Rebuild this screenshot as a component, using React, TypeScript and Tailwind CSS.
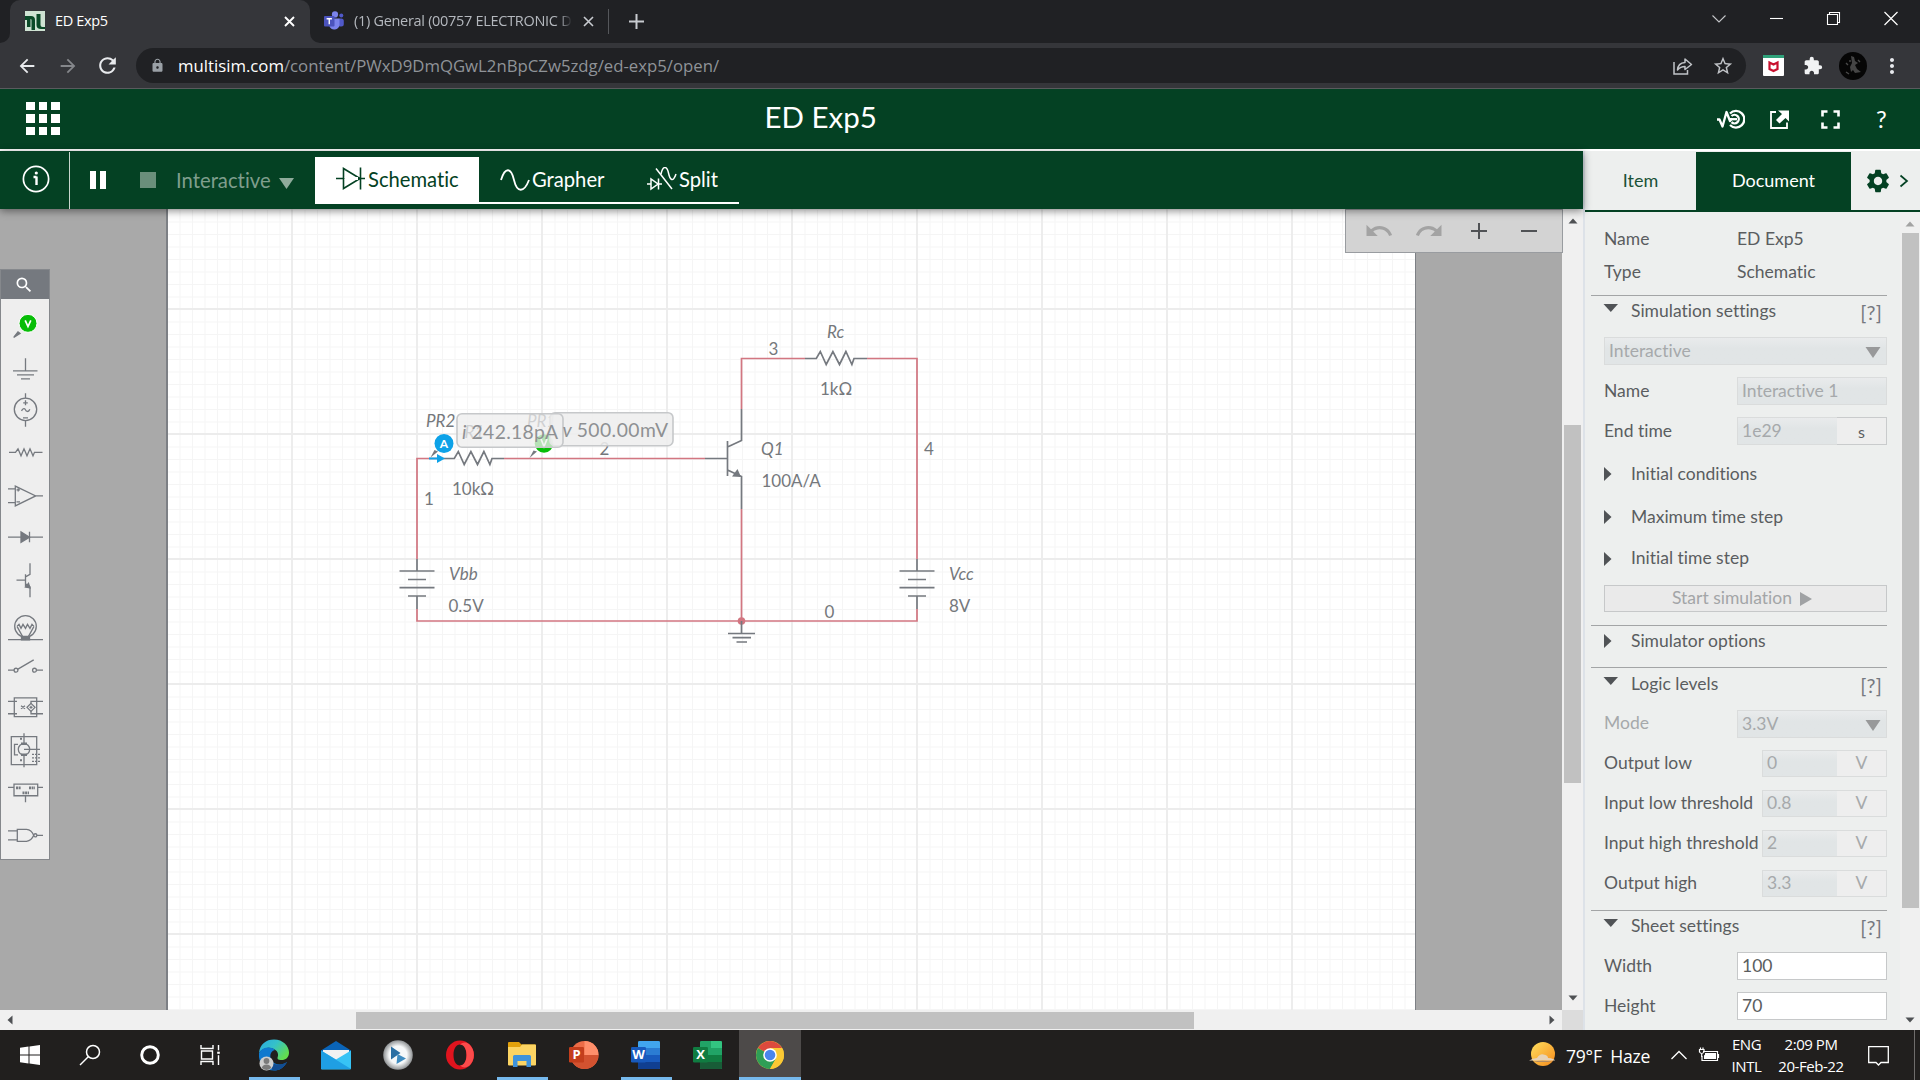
import React from "react";
import {
  MdOutlineStarBorder,
  MdExtension,
  MdMoreVert,
  MdLock,
  MdArrowBack,
  MdArrowForward,
  MdRefresh,
  MdUndo,
  MdRedo,
  MdSettings,
  MdSearch,
} from "react-icons/md";

const UI = "font-['Open_Sans',sans-serif]";
const LATO = "font-[Lato,sans-serif] [font-variant-ligatures:none]";

/* ---------- Browser chrome ---------- */

function TabStrip() {
  return (
    <div className="flex h-[43px] bg-[#202124]">
      <div className="relative ml-[10px] flex w-[300px] items-center rounded-t-[10px] bg-[#35363a] pl-[15px]">
        <svg className="absolute -left-[10px] bottom-0" width="10" height="10" viewBox="0 0 10 10">
          <path d="M10 0V10H0A10 10 0 0 0 10 0Z" fill="#35363a" />
        </svg>
        <svg className="absolute -right-[10px] bottom-0" width="10" height="10" viewBox="0 0 10 10">
          <path d="M0 0V10H10A10 10 0 0 1 0 0Z" fill="#35363a" />
        </svg>
        <svg width="20" height="20" viewBox="0 0 20 20" className="mt-[-1px]">
          <rect width="20" height="20" fill="#cfe3d3" />
          <path d="M0 5H6Q10 5 10 9V19H6.500V9Q6.500 8 5.500 8V16H2V9H0Z" fill="#0a4a28" />
          <path d="M11.500 3H15.500V14Q15.500 16 17.500 16H20V18H16Q11.500 18 11.500 14Z" fill="#0a4a28" />
        </svg>
        <span className={`ml-[10px] mt-[-2px] text-[14.5px] tracking-[-0.35px] text-white ${UI}`}>ED Exp5</span>
        <svg className="absolute left-[274px] top-[16px]" width="11" height="11" viewBox="0 0 11 11">
          <path d="M1 1L10 10M10 1L1 10" stroke="#fff" strokeWidth="1.9" />
        </svg>
      </div>
      <div className="flex items-center pl-[14px]">
        <svg width="20" height="20" viewBox="0 0 20 20" className="mt-[-1px]">
          <circle cx="11" cy="3.4" r="3.1" fill="#7b83eb" />
          <circle cx="17.3" cy="4.6" r="2" fill="#5059c9" />
          <rect x="13.5" y="7.6" width="6.3" height="8" rx="2.5" fill="#5059c9" />
          <path d="M5.5 7.5H15.5V14A5.300 5.300 0 0 1 5.500 15.500Z" fill="#7b83eb" />
          <rect x="0" y="5" width="10.5" height="10.5" rx="1" fill="#4b53bc" />
          <path d="M2.6 7.7H7.9M5.25 7.7V13.2" stroke="#fff" strokeWidth="1.4" />
        </svg>
        <span
          className={`ml-[10px] mt-[-2px] w-[218px] overflow-hidden whitespace-nowrap text-[14.5px] tracking-[-0.3px] text-[#b4b8be] [mask-image:linear-gradient(90deg,#000_205px,transparent_218px)] ${UI}`}
        >
          (1) General (00757 ELECTRONIC DEV
        </span>
        <svg className="ml-[11px]" width="11" height="11" viewBox="0 0 11 11">
          <path d="M1 1L10 10M10 1L1 10" stroke="#c8cbd0" strokeWidth="1.6" />
        </svg>
        <span className="ml-[14px] h-[25px] w-px bg-[#55575b]" />
        <svg className="ml-[20px]" width="15" height="15" viewBox="0 0 15 15">
          <path d="M7.5 0V15M0 7.5H15" stroke="#c8cbd0" strokeWidth="2" />
        </svg>
      </div>
      <svg className="ml-auto mr-[14px] mt-[11px]" width="194" height="16" viewBox="0 0 194 16" fill="none">
        <path d="M0.5 4.5L7 11L13.500 4.500" stroke="#c5c7ca" strokeWidth="1.1" />
        <path d="M58 7.500H71" stroke="#fff" strokeWidth="1.100" />
        <path d="M115.500 3.500H125.500V13.500H115.500ZM117.500 3.500V1.500H127.500V11.500H125.500" stroke="#fff" strokeWidth="1.100" />
        <path d="M172.500 1L185.500 14M185.500 1L172.500 14" stroke="#fff" strokeWidth="1.200" />
      </svg>
    </div>
  );
}

function AddressBar() {
  return (
    <div className="flex h-[46px] items-center border-b border-[#5a5b5e] bg-[#35363a] text-[#e8eaed]">
      <MdArrowBack size={22} className="ml-[16px]" />
      <MdArrowForward size={22} className="ml-[19px] text-[#85878b]" />
      <MdRefresh size={25} className="ml-[16px]" />
      <div className="ml-[16px] flex h-[35px] w-[1610px] items-center rounded-full bg-[#202124] pl-[14px]">
        <MdLock size={15} className="text-[#9aa0a6]" />
        <span className={`ml-[13px] whitespace-nowrap text-[16.750px] text-[#8f9398] ${UI}`}>
          <span className="text-white">multisim.com</span>/content/PWxD9DmQGwL2nBpCZw5zdg/ed-exp5/open/
        </span>
        <svg className="ml-auto" width="20" height="18" viewBox="0 0 20 18" fill="none" stroke="#c0c3c7" strokeWidth="1.5">
          <path d="M1 5V17H14.500V13" />
          <path d="M4.500 13Q5 6 12 5.500V2L18.500 7.500L12 12.500V9.500Q7.500 9.500 4.500 13Z" strokeLinejoin="round" />
        </svg>
        <MdOutlineStarBorder size={22} className="ml-[19px] mr-[12px] text-[#c0c3c7]" />
      </div>
      <svg className="ml-[17px]" width="21" height="21" viewBox="0 0 21 21">
        <rect width="21" height="21" rx="1" fill="#fff" />
        <rect width="21" height="3" fill="#2fa27a" />
        <path d="M6.500 14V7.500L10.500 9.500L14.500 7.500V14L10.500 16Z" fill="none" stroke="#c8102e" strokeWidth="2.200" />
      </svg>
      <MdExtension size={20} className="ml-[19px] text-[#f1f3f4]" />
      <svg className="ml-[16px]" width="28" height="28" viewBox="0 0 28 28">
        <circle cx="14" cy="14" r="14" fill="#060606" />
        <path d="M12 4L15 5L16 9L19 11L16 13L18 17L22 20L16 21L14 18L12 20L11 15L13 11Z" fill="#707070" opacity="0.600" />
        <path d="M7 11L9 13M19 8L21 10M7 20L10 22M11 8V10" stroke="#4a4a4a" strokeWidth="1.400" />
      </svg>
      <MdMoreVert size={24} className="ml-[13px]" />
    </div>
  );
}

/* ---------- Multisim header ---------- */

function AppHeader() {
  return (
    <div className="relative flex h-[62px] shrink-0 items-center border-b-2 border-white bg-[#044123]">
      <div className="ml-[26px] mt-[-1px] grid grid-cols-3 gap-x-[4px] gap-y-[4px]">
        {Array.from({ length: 9 }, (_, i) => (
          <span key={i} className="h-[8.500px] w-[8.500px] bg-white" />
        ))}
      </div>
      <div className={`ml-[705px] mt-[-4px] w-[130px] whitespace-nowrap text-[29.500px] leading-[36px] text-white ${LATO}`}>ED Exp5</div>
      <svg className="ml-auto" width="28" height="20" viewBox="0 0 28 20" fill="none" stroke="#fff" strokeWidth="2.300">
        <path d="M0 10.500H2.500L5.500 17.500L9.500 3L13 12L15 9.500" strokeLinejoin="round" />
        <path d="M13 4.500A8.300 8.300 0 1 1 13 16" />
        <path d="M14.500 7A4.300 4.300 0 1 1 14.500 13.200" />
        <path d="M13 10.200H20" />
      </svg>
      <svg className="ml-[25px]" width="19" height="19" viewBox="0 0 19 19" fill="none" stroke="#fff" strokeWidth="1.800">
        <path d="M6 2H1V18H17V12.500" />
        <path d="M8 0.500H19V11.500L15.500 8L9.500 13.500L6 10L12 4Z" fill="#fff" stroke="none" />
      </svg>
      <svg className="ml-[32px]" width="19" height="19" viewBox="0 0 19 19" fill="none" stroke="#fff" strokeWidth="2.600">
        <path d="M1.500 6.500V1.500H6.500M12.500 1.500H17.500V6.500M17.500 12.500V17.500H12.500M6.500 17.500H1.500V12.500" />
      </svg>
      <span className={`ml-[36px] mr-[32px] w-[12px] text-[24px] text-white ${LATO}`}>?</span>
    </div>
  );
}

function Toolbar() {
  return (
    <div className={`z-10 flex h-[58px] w-[1583px] shrink-0 bg-[#044123] text-white shadow-[0_2px_8px_rgba(0,0,0,0.450)] ${LATO}`}>
      <div className="mt-[1px] flex w-[70px] items-center border-r border-[#c8d6cd] pl-[22px]">
        <svg width="28" height="28" viewBox="0 0 28 28" fill="none" className="mt-[-3px]">
          <circle cx="14" cy="14" r="12.600" stroke="#fff" strokeWidth="1.700" />
          <path d="M14.500 11.500V20M11.500 12H14.500" stroke="#fff" strokeWidth="2.400" />
          <circle cx="14.300" cy="8" r="1.600" fill="#fff" />
        </svg>
      </div>
      <div className="ml-[20px] mt-[20px] h-[18px] w-[6px] bg-white" />
      <div className="ml-[4px] mt-[20px] h-[18px] w-[6px] bg-white" />
      <div className="ml-[34px] mt-[21px] h-[16px] w-[16px] bg-[#6a8f7b]" />
      <span className="ml-[20px] mt-[14px] w-[96px] text-[20.300px] leading-[30px] text-[#7f9e8d]">Interactive</span>
      <svg className="ml-[7px] mt-[27px]" width="15" height="11" viewBox="0 0 15 11">
        <path d="M0 0H15L7.500 11Z" fill="#8fab9b" />
      </svg>
      <div className="absolute left-[315px] flex text-[20.200px] leading-[30px]">
        <div className="mt-[6px] flex h-[47px] w-[164px] bg-white pl-[20px] text-[#044123]">
          <svg className="mt-[10px]" width="30" height="23" viewBox="0 0 30 23" fill="none" stroke="#044123" strokeWidth="1.600">
            <path d="M1 11.500H30M8.500 1.500V21.500L25 11.500ZM25.500 0.500V22.500" />
            <path d="M9.500 11.500H23" stroke="#fff" strokeWidth="3" />
          </svg>
          <span className="ml-[3px] mt-[7px]">Schematic</span>
        </div>
        <div className="mt-[6px] flex h-[47px] w-[260px] border-b-2 border-white">
          <svg className="ml-[21px] mt-[12px]" width="30" height="22" viewBox="0 0 30 22" fill="none" stroke="#fff" strokeWidth="1.800">
            <path d="M1 11C5 -2 11 -2 14 11S24 24 29 11" />
          </svg>
          <span className="ml-[2px] mt-[7px] w-[74px]">Grapher</span>
          <svg className="ml-[41px] mt-[10px]" width="30" height="24" viewBox="0 0 30 24" fill="none" stroke="#fff" strokeWidth="1.500">
            <path d="M9 1.500L25 22M0 17H4M4 12V22L11 17ZM11.500 11.500V22.500M11.500 17H15" />
            <path d="M14 7C16 -2 20 -1 21.500 6S26 16 29 7" />
          </svg>
          <span className="ml-[2px] mt-[7px]">Split</span>
        </div>
      </div>
    </div>
  );
}

/* ---------- Component palette ---------- */

const paletteIcons: React.ReactNode[] = [
  <>
    <path d="M-11.300 14L-7 8.500L-5 10Z" fill="#75797f" />
    <circle cx="3" cy="0" r="9" fill="#07bd07" stroke="#fff" strokeWidth="1" />
    <path d="M0.200 -3L3 3.200L5.800 -3" stroke="#fff" strokeWidth="1.700" />
  </>,
  <path d="M0.500 -8V4.500M-12 4.500H12.500M-8 8.500H9M-4 12.500H5" />,
  <>
    <circle cx="0.500" cy="1" r="11.200" />
    <path d="M0.500 -15V-10M0.500 12V18.500M-1.800 -5.500H2.800M0.500 -8V-3M-2 9.500H3" />
    <path d="M-3.500 2.500C-2 -0.500 0 0 0.500 1.500S3.500 4.500 4.800 1" />
  </>,
  <path d="M-16 1H-9.500L-7 -2.500L-4 4.500L-1 -2.500L2 4.500L5 -2.500L8 4.500L9.500 1H17.500" />,
  <>
    <path d="M-9.700 -8.300V11.500L10.700 1.600ZM10.700 1.600H18M-17 -5.500H-9.700M-17 8.300H-9.700" />
    <path d="M-8.500 -4.500H-5M-6.800 -6.200V-2.800M-8.500 7.500H-5" />
  </>,
  <>
    <path d="M-17 0.800H18M4.500 -4.500V6" />
    <path d="M-4 -4.500V6L4.500 0.800Z" fill="#75797f" />
  </>,
  <>
    <path d="M5 -16V-5L0.500 -2.500M0.500 -5V7.500M-8.500 0.800H0.500M0.500 4.500L5 7.500V18" />
    <path d="M5 8.500L0.500 7.800L3.500 4Z" fill="#75797f" />
  </>,
  <>
    <circle cx="0.500" cy="4" r="10.800" />
    <path d="M-17 17.300H18M-8 4L-6 2L-4 6L-2 2L0.500 6L2.500 2L5 6L7 2L9 4M-8 4L-2.500 14M9 4L3.500 14" />
    <path d="M-3.500 14H4.500V17.500H-3.500Z" fill="#75797f" />
  </>,
  <>
    <circle cx="-9" cy="4.800" r="1.900" />
    <circle cx="9.500" cy="4.800" r="1.900" />
    <path d="M-17 4.800H-11M11.500 4.800H18M-7.500 4L8.700 -5.500" />
  </>,
  <>
    <path d="M-10.700 -9.400H11.700V9.200H-10.700ZM-17 -6H-8M-17 6.400H-8M18 -6H6V6.400H18" />
    <path d="M6 -4L10 0L6 4L2 0Z" fill="#eee" />
    <path d="M-4 -1.500L0 1.500M0 -1.500L-4 1.500M4.500 0H7.500M6 -1.500V1.500" />
  </>,
  <>
    <path d="M-13.700 -13.800H11.700V14.300H-13.700ZM-1 -17V-7M-1 5V17M-1 -1H15M-7 -6H-10.500V4.500H-7" />
    <circle cx="-1" cy="-1" r="5.700" />
    <path d="M-4 -6.500H2M-4 4.500H2" strokeWidth="2.500" />
    <path d="M7 4H15M7 7.500H15M7 11H15" strokeDasharray="2 1" />
    <path d="M-5 -11.500H-3M-5 10H-3" strokeWidth="2" />
  </>,
  <>
    <path d="M-11 -9.200H12.700V2.400H-11ZM-17 -6H-11M12.700 -6H18M0.500 2.400V9" />
    <path d="M-9 -5.500H-4M4 -5.500H10M-2.500 -0.500H4" strokeWidth="2.600" strokeDasharray="2 0.600" />
  </>,
  <>
    <path d="M-7.700 -5.900H1.500Q6.500 -5.500 8.700 0Q6.500 5.500 1.500 6H-7.700ZM-17 -4.500H-7.700M-17 4.500H-7.700M12 0H18" />
    <circle cx="10.300" cy="0" r="1.600" />
  </>,
];

function Palette() {
  return (
    <div className="absolute left-0 top-[60px] flex h-[591px] w-[50px] flex-col border border-[#85888c] bg-[#eee]">
      <div className="mb-[3px] flex h-[29px] items-center justify-center bg-[#75797f] pr-[2px] pt-[1px]">
        <MdSearch size={20} className="text-white" />
      </div>
      {paletteIcons.map((icon, i) => (
        <svg key={i} width="50" height="42.700" viewBox="-25 -21.350 50 42.700" fill="none" stroke="#75797f" strokeWidth="1.300" className="-ml-px shrink-0">
          {icon}
        </svg>
      ))}
    </div>
  );
}

/* ---------- Schematic ---------- */

function Battery({ x }: { x: number }) {
  return (
    <g stroke="#75797f" strokeWidth="1.700">
      <path d={`M${x} 559V571M${x} 596V609`} />
      <path d={`M${x - 17.5} 571H${x + 17.5}M${x - 9} 579.500H${x + 9}M${x - 17.5} 587.700H${x + 17.5}M${x - 9} 596H${x + 9}`} />
    </g>
  );
}

function Circuit() {
  return (
    <svg width="1247" height="801" viewBox="168 209 1247 801" className={LATO} fill="none">
      <defs>
        <pattern id="minor" x="417" y="434" width="12.500" height="12.500" patternUnits="userSpaceOnUse">
          <path d="M0.500 0V12.500M0 0.500H12.500" stroke="#f5f5f5" strokeWidth="1" />
        </pattern>
        <pattern id="major" x="416" y="433" width="125" height="125" patternUnits="userSpaceOnUse">
          <path d="M1 0V125M0 1H125" stroke="#ececec" strokeWidth="1.800" />
        </pattern>
      </defs>
      <rect x="168" y="209" width="1247" height="801" fill="#fff" />
      <rect x="168" y="209" width="1247" height="801" fill="url(#minor)" />
      <rect x="168" y="209" width="1247" height="801" fill="url(#major)" />
      <g stroke="#d27681" strokeWidth="1.700">
        <path d="M443 458.500H417V559M417 609V621H917V609M504 458.500H705M741.500 409V358.500H805M867 358.500H917V559M741.500 509V621" />
      </g>
      <circle cx="741.500" cy="621" r="3.800" fill="#d27681" />
      <Battery x={417} />
      <Battery x={917} />
      <g stroke="#75797f" strokeWidth="1.700">
        <path d="M443 458.500H454.300L458.300 451.500L464.200 464.500L470.900 451.500L477.500 464.500L483.900 451.500L489.900 464.500L492 458.500H504" />
        <path d="M805 358.500H816.300L820.300 351.500L826.200 364.500L832.900 351.500L839.500 364.500L845.900 351.500L851.900 364.500L854 358.500H867" />
        <path d="M705 458.500H727.500M727.500 441V476M741.500 409V440.500L727.500 447M727.500 470L741.500 476.500V509" />
        <path d="M741.500 621V633.500M728 633.500H755M732.500 637.700H751M736.500 642H747" />
      </g>
      <path d="M741 477L732 476.500L737.500 469Z" fill="#75797f" />
      <g fill="#75787c" fontSize="17">
        <g fontStyle="italic">
          <text x="827" y="338">Rc</text>
          <text x="426" y="426.500">PR2</text>
          <text x="761" y="455">Q1</text>
          <text x="449" y="580">Vbb</text>
          <text x="949" y="580">Vcc</text>
        </g>
        <text x="768.500" y="354.500">3</text>
        <text x="820" y="394.500">1kΩ</text>
        <text x="599.500" y="455">2</text>
        <text x="924" y="455">4</text>
        <text x="424" y="505">1</text>
        <text x="452" y="494.500">10kΩ</text>
        <text x="761.500" y="487">100A/A</text>
        <text x="448.500" y="611.500">0.5V</text>
        <text x="949" y="611.500">8V</text>
        <text x="824.500" y="617.500">0</text>
      </g>
      {/* probes */}
      <path d="M529.500 458L533.500 450.500L537 451.500Z" fill="#75797f" />
      <circle cx="544" cy="443.500" r="9.300" fill="#07bd07" />
      <path d="M541 439L544 446.500L547 439" stroke="#fff" strokeWidth="1.700" />
      <g fill="#6d7074" fontSize="17" fontStyle="italic">
        <text x="527" y="426.500">PR1</text>
        <text x="464.500" y="438">R1</text>
      </g>
      <rect x="550" y="412.700" width="123" height="33" rx="5" fill="#eee" fillOpacity="0.880" stroke="#c6c8ca" strokeWidth="1.600" />
      <rect x="457" y="413.700" width="106" height="33.500" rx="5" fill="#eee" fillOpacity="0.760" stroke="#c6c8ca" strokeWidth="1.600" />
      <g fill="#8e9093" fontSize="19.300">
        <text x="462" y="439" textLength="96">
          <tspan fontStyle="italic">i </tspan>242.18pA
        </text>
        <text x="562.500" y="437" textLength="105.500">
          <tspan fontStyle="italic">v </tspan>500.00mV
        </text>
      </g>
      <path d="M430.500 457.500L434.500 450L438 451.500Z" fill="#75797f" />
      <path d="M429 458.500H439" stroke="#0da2e8" strokeWidth="2" />
      <path d="M437 454L445 458.500L437 463Z" fill="#0da2e8" />
      <circle cx="444" cy="443.500" r="9.500" fill="#0da2e8" />
      <text x="444" y="448" fontSize="12" fontWeight="700" fill="#fff" textAnchor="middle">
        A
      </text>
    </svg>
  );
}

function Arrow({ d, c = "#4f5154" }: { d: string; c?: string }) {
  return (
    <svg width="10" height="10" viewBox="0 0 10 10" className="shrink-0">
      <path d={d} fill={c} />
    </svg>
  );
}
const UP = "M0.500 7.500L5 2.500L9.500 7.500Z";
const DOWN = "M0.500 2.500L5 7.500L9.500 2.500Z";
const LEFT = "M7.500 0.500L2.500 5L7.500 9.500Z";
const RIGHT = "M2.500 0.500L7.500 5L2.500 9.500Z";

function Workspace() {
  return (
    <div className="flex h-[821px] w-[1583px] flex-col">
      <div className="relative flex h-[801px]">
        <div className="flex w-[1562px] overflow-hidden bg-[#a9a9a9] pl-[166px]">
          <div className="box-content flex w-[1247px] border-l-2 border-r border-[#7d8085]">
            <Circuit />
          </div>
        </div>
        <div className="flex w-[21px] flex-col items-center bg-[#f0f0f0] pt-[7px]">
          <Arrow d={UP} />
          <div className="mt-[199px] h-[358px] w-[17px] bg-[#c1c1c1]" />
          <div className="mb-[7px] mt-auto">
            <Arrow d={DOWN} />
          </div>
        </div>
        <Palette />
        <div className="absolute left-[1345px] top-0 flex h-[44px] w-[218px] items-center border border-[#999ca0] bg-[#d3d3d3] text-[#a3a3a3]">
          <MdUndo size={30} className="ml-[18px]" />
          <MdRedo size={30} className="ml-[20px]" />
          <svg className="ml-[27px]" width="16" height="16" viewBox="0 0 16 16">
            <path d="M8 0V16M0 8H16" stroke="#505255" strokeWidth="2" />
          </svg>
          <svg className="ml-[34px]" width="16" height="16" viewBox="0 0 16 16">
            <path d="M0 8H16" stroke="#505255" strokeWidth="2" />
          </svg>
        </div>
      </div>
      <div className="flex h-[20px] items-center bg-[#f0f0f0] pl-[5px]">
        <Arrow d={LEFT} />
        <div className="ml-[341px] h-[17px] w-[838px] bg-[#c1c1c1]" />
        <div className="ml-auto mr-[5px]">
          <Arrow d={RIGHT} />
        </div>
        <div className="h-[20px] w-[21px] bg-[#dcdcdc]" />
      </div>
    </div>
  );
}

/* ---------- Properties panel ---------- */

const field = "flex h-[28px] items-center border border-[#dadcdc] bg-linear-to-b from-[#e9ebec] to-[#e1e5e6] to-40% pl-[4px] text-[#a6a9ab]";

function Rule({ className }: { className: string }) {
  return <div className={`h-px w-[296px] shrink-0 bg-[#a3a5a6] ${className}`} />;
}

function Row({ label, children, h = "h-[40px]", muted }: { label: string; children: React.ReactNode; h?: string; muted?: boolean }) {
  return (
    <div className={`flex shrink-0 items-center pl-[13px] ${h}`}>
      <span className={`w-[133px] whitespace-nowrap ${muted ? "mt-[-2px] text-[#a6a9ab]" : ""}`}>{label}</span>
      {children}
    </div>
  );
}

function Section({ label, open, h = "h-[30px]" }: { label: string; open?: boolean; h?: string }) {
  return (
    <div className={`flex shrink-0 items-center pl-[12px] ${h}`}>
      <svg width="16" height="16" viewBox="0 0 16 16" className={open ? "mt-[-6px]" : ""}>
        <path d={open ? "M0.500 4H15L7.800 12Z" : "M1 1V15L8.500 8Z"} fill="#505356" />
      </svg>
      <span className="ml-[12px]">{label}</span>
      {open && <span className="ml-auto mr-[18px] mt-[2px] text-[20px] leading-none tracking-[0.200px] text-[#75797f]">[?]</span>}
    </div>
  );
}

function Tri() {
  return (
    <svg width="16" height="11" viewBox="0 0 16 11" className="ml-auto mr-[5px] mt-[2px]">
      <path d="M0.500 0H15.500L8 11Z" fill="#98999a" />
    </svg>
  );
}

function Volt({ value }: { value: string }) {
  return (
    <div className="ml-[25px] flex h-[27px] w-[125px] border border-[#dadcdc] text-[#a6a9ab]">
      <div className="flex w-[74px] items-center bg-linear-to-b from-[#e9ebec] to-[#e1e5e6] to-40% pl-[4px] pt-px">{value}</div>
      <div className="flex flex-1 items-center justify-center bg-[#eee]">V</div>
    </div>
  );
}

function Panel() {
  return (
    <div className={`flex w-[337px] flex-col border-l-2 border-[#dde2e8] bg-[#edefee] ${LATO}`}>
      <div className="flex h-[61px] shrink-0 border-b-2 border-[#044123] pt-[1px] text-[18px] text-[#1b5236]">
        <div className="flex w-[111px] items-center justify-center pb-[2px]">Item</div>
        <div className="flex w-[155px] items-center justify-center bg-[#044123] pb-[2px] text-white">Document</div>
        <div className="flex flex-1 items-center pl-[13px] text-[#044123]">
          <MdSettings size={28} />
          <svg className="ml-[7px]" width="10" height="14" viewBox="0 0 10 14">
            <path d="M1.500 1.500L8 7L1.500 12.500" fill="none" stroke="#044123" strokeWidth="1.700" />
          </svg>
        </div>
      </div>
      <div className="flex h-[818px]">
        <div className="flex w-[315px] flex-col overflow-hidden pl-[6px] pt-[11px] text-[17.500px] text-[#5a5d60]">
          <Row label="Name" h="h-[33px]">ED Exp5</Row>
          <Row label="Type" h="h-[33px]">Schematic</Row>
          <Rule className="mt-[6px]" />
          <Section label="Simulation settings" open />
          <div className={`ml-[13px] mt-[11px] w-[283px] shrink-0 pt-px ${field}`}>
            Interactive
            <Tri />
          </div>
          <div className="h-[6px] shrink-0" />
          <Row label="Name">
            <div className={`w-[150px] pt-px ${field}`}>Interactive 1</div>
          </Row>
          <Row label="End time">
            <div className={`w-[100px] ${field} border-r-0`}>1e29</div>
            <div className="flex h-[28px] w-[50px] items-center justify-center border border-l-0 border-[#c9cbcc] bg-[#eee] pt-px text-[16px]">s</div>
          </Row>
          <Section label="Initial conditions" h="h-[46px]" />
          <Section label="Maximum time step" h="h-[40px]" />
          <Section label="Initial time step" h="h-[43px]" />
          <div className="ml-[13px] mt-[5px] flex h-[27px] w-[283px] shrink-0 items-center justify-center border border-[#c6c8c9] bg-[#eaeaea] pr-[7px] text-[#a3a5a7]">
            Start simulation
            <svg width="12" height="14" viewBox="0 0 12 14" className="ml-[8px]">
              <path d="M0 0L12 7L0 14Z" fill="#a0a2a4" />
            </svg>
          </div>
          <Rule className="mt-[13px]" />
          <Section label="Simulator options" />
          <Rule className="mt-[11px]" />
          <Section label="Logic levels" open h="h-[32px]" />
          <div className="h-[4px] shrink-0" />
          <Row label="Mode" muted>
            <div className={`w-[150px] pt-px ${field}`}>
              3.3V
              <Tri />
            </div>
          </Row>
          <div className="-mt-px flex shrink-0 flex-col">
            <Row label="Output low"><Volt value="0" /></Row>
            <Row label="Input low threshold"><Volt value="0.8" /></Row>
            <Row label="Input high threshold"><Volt value="2" /></Row>
            <Row label="Output high"><Volt value="3.3" /></Row>
          </div>
          <Rule className="mt-[7px]" />
          <Section label="Sheet settings" open />
          <div className="h-[5px] shrink-0" />
          <Row label="Width">
            <div className="flex h-[28px] w-[150px] items-center border border-[#c6c8c9] bg-white pl-[4px] pt-px">100</div>
          </Row>
          <Row label="Height">
            <div className="flex h-[28px] w-[150px] items-center border border-[#c6c8c9] bg-white pl-[4px] pt-px">70</div>
          </Row>
        </div>
        <div className="flex w-[20px] flex-col items-center bg-[#f0f0f0] pt-[7px]">
          <Arrow d={UP} c="#a3a3a3" />
          <div className="mt-[4px] h-[675px] w-[17px] bg-[#c1c1c1]" />
          <div className="mb-[5px] mt-auto">
            <Arrow d={DOWN} />
          </div>
        </div>
      </div>
    </div>
  );
}

/* ---------- Windows taskbar ---------- */

function OfficeIcon({ letter, tile, shades, round }: { letter: string; tile: string; shades: string[]; round?: boolean }) {
  return (
    <svg width="30" height="30" viewBox="0 0 30 30">
      {round ? (
        <>
          <circle cx="15.500" cy="15" r="14" fill={shades[0]} />
          <path d="M15.500 1A14 14 0 0 1 29.500 15H15.500Z" fill={shades[1]} />
          <path d="M1.500 15H29.500A14 14 0 0 1 1.500 15Z" fill={shades[2]} />
        </>
      ) : (
        <g>
          <rect x="7" y="1" width="22" height="28" rx="1.500" fill={shades[1]} />
          <path d="M7 8V2.500Q7 1 8.500 1H27.500Q29 1 29 2.500V8Z" fill={shades[0]} />
          <rect x="7" y="15" width="22" height="7" fill={shades[2]} />
          <path d="M7 22H29V27.500Q29 29 27.500 29H8.500Q7 29 7 27.500Z" fill={shades[3]} />
          {letter === "X" && <path d="M18 1H27.500Q29 1 29 2.500V8H18Z" fill="#33c481" />}
        </g>
      )}
      <rect x="0" y="7" width="15" height="15.500" rx="1.300" fill={tile} />
      <text x="7.500" y="19.300" fontSize="13" fontWeight="700" fill="#fff" textAnchor="middle" fontFamily="Open Sans">
        {letter}
      </text>
    </svg>
  );
}

function TaskButton({ children, running, active }: { children: React.ReactNode; running?: boolean; active?: boolean }) {
  return (
    <div className={`relative flex h-[50px] w-[62px] items-center justify-center ${active ? "bg-[#4d4a49]" : ""}`}>
      {children}
      {running && <div className={`absolute bottom-0 h-[3px] bg-[#76b9ed] ${active ? "w-[62px]" : "w-[51px]"}`} />}
    </div>
  );
}

function Taskbar() {
  return (
    <div className={`flex h-[50px] bg-[#211f1e] text-white ${UI}`}>
      <div className="flex w-[60px] items-center justify-center">
        <svg width="20" height="20" viewBox="0 0 20 20" fill="#fff">
          <path d="M0 2.800L8.500 1.600V9.500H0ZM9.500 1.450L20 0V9.500H9.500ZM0 10.500H8.500V18.400L0 17.200ZM9.500 10.500H20V20L9.500 18.550Z" />
        </svg>
      </div>
      <div className="flex w-[60px] items-center justify-center">
        <svg width="22" height="22" viewBox="0 0 22 22" fill="none" stroke="#fff" strokeWidth="1.500">
          <circle cx="14" cy="8" r="6.500" />
          <path d="M9.500 12.500L1 21" />
        </svg>
      </div>
      <div className="flex w-[60px] items-center justify-center">
        <svg width="20" height="20" viewBox="0 0 20 20">
          <circle cx="10" cy="10" r="8.300" fill="none" stroke="#fff" strokeWidth="2.900" />
        </svg>
      </div>
      <div className="flex w-[60px] items-center justify-center">
        <svg width="21" height="20" viewBox="0 0 21 20" fill="none" stroke="#fff" strokeWidth="1.400">
          <path d="M1 0V3.500H13V0M1 20V16.500H13V20M1.500 6H12.500V14H1.500ZM18.500 0V20" />
          <rect x="16.500" y="6" width="4" height="3.500" fill="#fff" stroke="#211f1e" />
        </svg>
      </div>
      <div className="ml-[3px] flex">
        <TaskButton running>
          <svg width="30" height="32" viewBox="0 0 30 32">
            <defs>
              <linearGradient id="edgeTop" x1="0" y1="0" x2="1" y2="0.600">
                <stop offset="0" stopColor="#2aa9e0" />
                <stop offset="0.500" stopColor="#35c1c9" />
                <stop offset="1" stopColor="#62dd4e" />
              </linearGradient>
            </defs>
            <path d="M0 14C1 5 7 0.500 15 0.500C24 0.500 30 7 30 13.500C30 19 26 21.500 21.500 21C17.500 20.500 18.500 18.500 19 17C20 12 14 8 8 9C4 9.500 1 12 0 14Z" fill="url(#edgeTop)" />
            <path d="M0 14C3 8 12 7 16 11C11 12 10 18 13 22C16 26 22 27 28 23C25 29 20 31.500 15 31.500C5 31.500 -1 23 0 14Z" fill="#0f79cf" />
            <path d="M11 18C12 26 20 28 28 23C25 29 20 31.500 15 31.500C10 30 8 22 11 18Z" fill="#124d92" />
            <circle cx="7.500" cy="24.500" r="7" fill="#cfcfcf" />
            <circle cx="7.500" cy="22" r="2.900" fill="#7b7b7b" />
            <path d="M2.800 29Q3.500 25.500 7.500 25.500T12.200 29Q7.500 33 2.800 29Z" fill="#7b7b7b" />
          </svg>
        </TaskButton>
        <TaskButton>
          <svg width="30" height="30" viewBox="0 0 30 30">
            <path d="M0 10.500L15 1L30 10.500V15H0Z" fill="#0a64b8" />
            <path d="M2 10H28V20H2Z" fill="#f2f2f2" />
            <path d="M0 10.500L15 19.500L30 10.500V28.500Q30 29.500 29 29.500H1Q0 29.500 0 28.500Z" fill="#37c3f5" />
            <path d="M0 10.500L30 29H1Q0 29 0 28Z" fill="#1f9fe3" />
          </svg>
        </TaskButton>
        <TaskButton>
          <svg width="30" height="32" viewBox="0 0 30 32">
            <defs>
              <radialGradient id="disc">
                <stop offset="0.600" stopColor="#f6f8f9" />
                <stop offset="1" stopColor="#8e9193" />
              </radialGradient>
            </defs>
            <circle cx="15" cy="16" r="14.800" fill="url(#disc)" />
            <path d="M8 7.500L17.500 14L8 20.500Z" fill="#2a6fa3" />
            <path d="M14.500 15L23 19.500L13.500 25Z" fill="#3f8cc0" />
          </svg>
        </TaskButton>
        <TaskButton>
          <svg width="30" height="30" viewBox="0 0 30 30">
            <path fillRule="evenodd" d="M15 0.500A14 14.500 0 1 0 15 29.500A14 14.500 0 1 0 15 0.500ZM15 4.500C19 4.500 21.500 9 21.500 15S19 25.500 15 25.500S8.500 21 8.500 15S11 4.500 15 4.500Z" fill="#e0141e" />
            <path d="M15 4.500C19 4.500 21.500 9 21.500 15S19 25.500 15 25.500Q19 29 24 26A14 14.500 0 0 0 24 4Q19 1 15 4.500Z" fill="#fb4b4b" />
          </svg>
        </TaskButton>
        <TaskButton running>
          <svg width="28" height="26" viewBox="0 0 28 26">
            <path d="M0 1Q0 0 1 0H11L13.500 2.500H27Q28 2.500 28 3.500V23H0Z" fill="#e2a10c" />
            <path d="M0 5H12L14 2.500H27Q28 2.500 28 3.500V22.500Q28 23.500 27 23.500H1Q0 23.500 0 22.500Z" fill="#fcd463" />
            <path d="M5 25V14.500Q5 13 6.500 13H21.500Q23 13 23 14.500V25H18.500V19H9.500V25Z" fill="#3f93dc" />
          </svg>
        </TaskButton>
        <TaskButton>
          <OfficeIcon letter="P" tile="#c43e1c" shades={["#ed6c47", "#ff8f6b", "#d35230"]} round />
        </TaskButton>
        <TaskButton running>
          <OfficeIcon letter="W" tile="#185abd" shades={["#41a5ee", "#2b7cd3", "#185abd", "#103f91"]} />
        </TaskButton>
        <TaskButton>
          <OfficeIcon letter="X" tile="#107c41" shades={["#21a366", "#21a366", "#107c41", "#185c37"]} />
        </TaskButton>
        <TaskButton running active>
          <svg width="28" height="28" viewBox="0 0 28 28">
            <circle cx="14" cy="14" r="14" fill="#fbc934" />
            <path d="M14 14L1.900 7A14 14 0 0 1 26.100 7L14 7Z" fill="#dc4a3d" />
            <path d="M1.900 7A14 14 0 0 0 14 28L20 17.500L14 14Z" fill="#2f9e56" />
            <path d="M14 7H26.100A14 14 0 0 1 14 28L20 17.500Z" fill="#fbc934" />
            <circle cx="14" cy="14" r="6.800" fill="#fff" />
            <circle cx="14" cy="14" r="5.300" fill="#4a85ee" />
          </svg>
        </TaskButton>
      </div>
      <div className="ml-auto flex items-center">
        <svg width="30" height="28" viewBox="0 0 30 28" className="mr-[8px]">
          <defs>
            <linearGradient id="sun" x1="0" y1="0" x2="1" y2="1">
              <stop offset="0" stopColor="#ffdf5e" />
              <stop offset="1" stopColor="#f58a1c" />
            </linearGradient>
          </defs>
          <circle cx="15" cy="13" r="12" fill="url(#sun)" />
          <path d="M1 19.500Q5 17 9 17Q12 12.500 15.500 13.500Q20 14 20 17Q26 17.500 27 19.500Z" fill="#e7d3b8" />
          <path d="M5 21Q14 18.500 25 21Z" fill="#b08a62" />
        </svg>
        <span className="mt-[3px] w-[105px] whitespace-nowrap text-[17.600px] tracking-[-0.250px]">79°F&nbsp; Haze</span>
        <svg width="16" height="10" viewBox="0 0 16 10">
          <path d="M0.500 9L8 1.500L15.500 9" fill="none" stroke="#fff" strokeWidth="1.300" />
        </svg>
        <svg width="22" height="16" viewBox="0 0 22 16" className="ml-[11px]" fill="none" stroke="#fff" strokeWidth="1.200">
          <path d="M5 4.500H19.500V13.500H4V9" />
          <path d="M7 6H18V12H6V8.500Q7.500 7.500 7 6Z" fill="#fff" stroke="none" />
          <path d="M20.500 7V11M1.500 2.500H6V5Q3.700 8 1.500 5ZM2.500 0.500V2.500M5 0.500V2.500M3.700 7V10" />
        </svg>
        <div className="ml-[4px] flex w-[45px] flex-col items-center text-[15px] leading-[22px] tracking-[-0.450px]">
          <span>ENG</span>
          <span>INTL</span>
        </div>
        <div className="flex w-[84px] flex-col items-center whitespace-nowrap text-[15px] leading-[22px] tracking-[-0.450px]">
          <span>2:09 PM</span>
          <span>20-Feb-22</span>
        </div>
        <svg width="21" height="20" viewBox="0 0 21 20" className="ml-[15px] mt-[1px]">
          <path d="M0.700 0.700H20.300V16.500H13L10.500 19L8 16.500H0.700Z" fill="none" stroke="#fff" strokeWidth="1.300" />
        </svg>
      </div>
      <div className="ml-[25px] mr-[5px] w-px bg-[#6f6d6c]" />
    </div>
  );
}

export default function App() {
  return (
    <div className="flex h-[1080px] w-[1920px] flex-col overflow-hidden">
      <TabStrip />
      <AddressBar />
      <AppHeader />
      <div className="flex h-[879px]">
        <div className="relative flex w-[1583px] flex-col">
          <Toolbar />
          <Workspace />
        </div>
        <Panel />
      </div>
      <Taskbar />
    </div>
  );
}
